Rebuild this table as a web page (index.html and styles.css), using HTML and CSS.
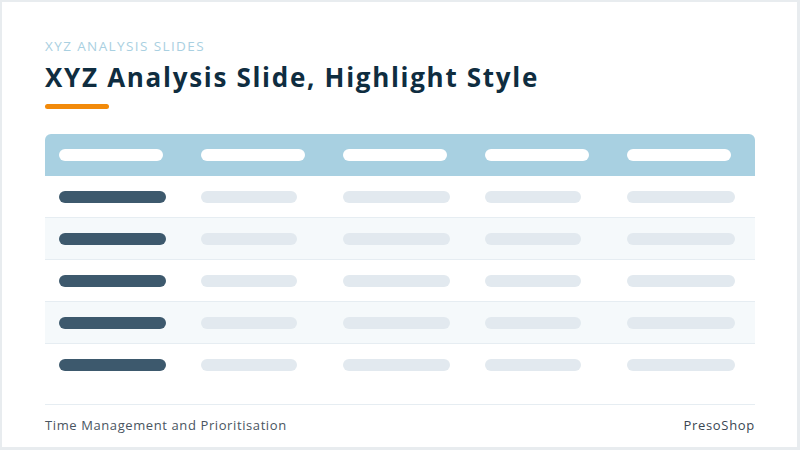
FILE: index.html
```html
<!DOCTYPE html>
<html>
<head>
<meta charset="utf-8">
<link rel="stylesheet" href="styles.css">
</head>
<body>
<div class="slide">
  <div class="kicker">XYZ ANALYSIS SLIDES</div>
  <h1 class="title">XYZ Analysis Slide, Highlight Style</h1>
  <div class="accent"></div>
  <div class="table">
    <div class="row head">
      <div class="cell"><span class="bar hb"></span></div>
      <div class="cell"><span class="bar hb"></span></div>
      <div class="cell"><span class="bar hb"></span></div>
      <div class="cell"><span class="bar hb"></span></div>
      <div class="cell"><span class="bar hb"></span></div>
    </div>
    <div class="row">
      <div class="cell"><span class="bar dk"></span></div>
      <div class="cell"><span class="bar lt w96"></span></div>
      <div class="cell"><span class="bar lt w107"></span></div>
      <div class="cell"><span class="bar lt w96"></span></div>
      <div class="cell"><span class="bar lt w108"></span></div>
    </div>
    <div class="row alt">
      <div class="cell"><span class="bar dk"></span></div>
      <div class="cell"><span class="bar lt w96"></span></div>
      <div class="cell"><span class="bar lt w107"></span></div>
      <div class="cell"><span class="bar lt w96"></span></div>
      <div class="cell"><span class="bar lt w108"></span></div>
    </div>
    <div class="row">
      <div class="cell"><span class="bar dk"></span></div>
      <div class="cell"><span class="bar lt w96"></span></div>
      <div class="cell"><span class="bar lt w107"></span></div>
      <div class="cell"><span class="bar lt w96"></span></div>
      <div class="cell"><span class="bar lt w108"></span></div>
    </div>
    <div class="row alt">
      <div class="cell"><span class="bar dk"></span></div>
      <div class="cell"><span class="bar lt w96"></span></div>
      <div class="cell"><span class="bar lt w107"></span></div>
      <div class="cell"><span class="bar lt w96"></span></div>
      <div class="cell"><span class="bar lt w108"></span></div>
    </div>
    <div class="row last">
      <div class="cell"><span class="bar dk"></span></div>
      <div class="cell"><span class="bar lt w96"></span></div>
      <div class="cell"><span class="bar lt w107"></span></div>
      <div class="cell"><span class="bar lt w96"></span></div>
      <div class="cell"><span class="bar lt w108"></span></div>
    </div>
  </div>
  <div class="footer">
    <span class="ftext">Time Management and Prioritisation</span>
    <span class="brand">PresoShop</span>
  </div>
</div>
</body>
</html>
```

FILE: styles.css
```css
html, body {
  margin: 0;
  padding: 0;
}
body {
  width: 800px;
  height: 450px;
  background: #e8ecef;
  padding: 2px 3px 3px 2px;
  box-sizing: border-box;
  font-family: "Open Sans", "DejaVu Sans", sans-serif;
  overflow: hidden;
}
.slide {
  width: 795px;
  height: 445px;
  background: #ffffff;
  box-sizing: border-box;
  padding: 35px 43px 0 43px;
  display: flex;
  flex-direction: column;
}
.kicker {
  font-size: 13.5px;
  line-height: 18px;
  color: #a9d0e1;
  letter-spacing: 1.4px;
}
.title {
  margin: 5px 0 0 0;
  font-size: 26px;
  line-height: 34px;
  font-weight: 700;
  color: #0f2d40;
  letter-spacing: 1.7px;
}
.accent {
  margin-top: 10px;
  width: 64px;
  height: 5px;
  border-radius: 3px;
  background: #f28a0a;
}
.table {
  margin-top: 25px;
  width: 710px;
  display: flex;
  flex-direction: column;
}
.row {
  display: grid;
  grid-template-columns: repeat(5, 1fr);
  height: 42px;
  border-bottom: 1px solid #e6edf2;
  box-sizing: border-box;
}
.row.alt {
  background: #f5f9fb;
}
.row.last {
  border-bottom: none;
}
.row.head {
  background: #a8d0e1;
  border-radius: 6px 6px 0 0;
  border-bottom: none;
}
.cell {
  display: flex;
  align-items: center;
  padding-left: 14px;
}
.bar {
  display: block;
  height: 12px;
  border-radius: 6px;
}
.hb {
  width: 104px;
  background: #ffffff;
}
.dk {
  width: 107px;
  background: #3d596d;
}
.lt {
  background: #e2e9ef;
}
.w96 { width: 96px; }
.w107 { width: 107px; }
.w108 { width: 108px; }
.footer {
  margin-top: 18px;
  width: 710px;
  border-top: 1px solid #e6edf2;
  display: flex;
  justify-content: space-between;
  align-items: center;
  height: 40px;
}
.ftext {
  font-size: 13px;
  color: #4a5561;
  letter-spacing: 0.6px;
}
.brand {
  font-size: 13px;
  font-weight: 500;
  color: #3a4652;
  letter-spacing: 0.7px;
}
```
